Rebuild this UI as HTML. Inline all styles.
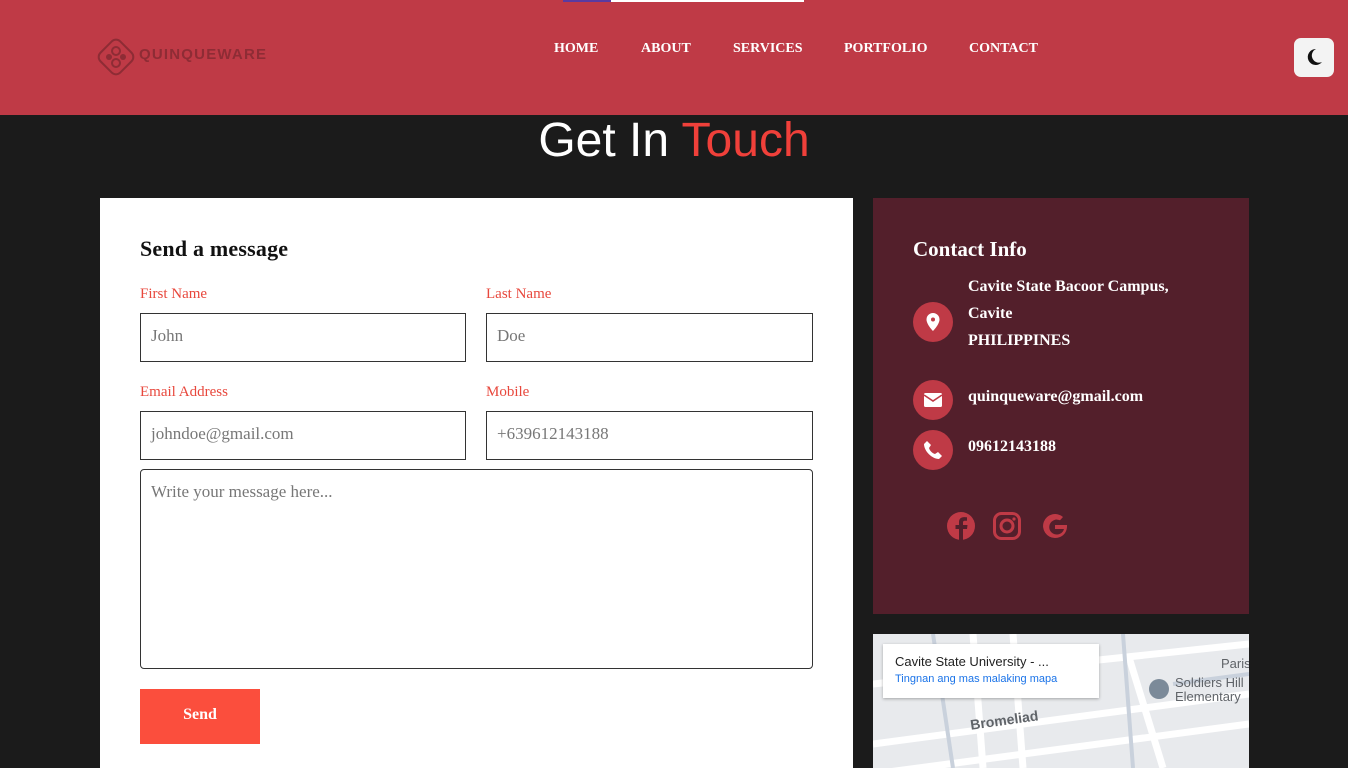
<!DOCTYPE html>
<html><head><meta charset="utf-8"><style>
*{box-sizing:border-box;margin:0;padding:0}
html,body{width:1348px;height:768px;overflow:hidden}
body{background:#1b1b1b;font-family:"Liberation Serif",serif;position:relative}
.hdr{position:absolute;left:0;top:0;width:1348px;height:115px;background:#bf3a46}
.nav a{position:absolute;top:41px;color:#fff;font-weight:bold;font-size:14px;text-decoration:none}
.abs{position:absolute}
h1{position:absolute;top:113px;width:1348px;text-align:center;font-family:"Liberation Sans",sans-serif;font-weight:normal;font-size:48px;color:#fff}
.card{position:absolute;left:100px;top:198px;width:753px;height:570px;background:#fff}
.lbl{position:absolute;color:#e8483d;font-size:15px}
.inp{position:absolute;border:1px solid #333;height:49px;color:#777;font-size:17px;padding:12px 10px}
.ci{position:absolute;left:873px;top:198px;width:376px;height:416px;background:#531f2b;color:#fff}
.ic{position:absolute;left:40px;width:40px;height:40px;border-radius:50%;background:#bf3a46}
.ct{position:absolute;left:95px;font-weight:bold;font-size:16px}
</style></head><body>
<div class="hdr">
<div class="abs" style="left:563px;top:0;width:48px;height:2px;background:#5a3aa0"></div>
<div class="abs" style="left:611px;top:0;width:193px;height:2px;background:#fff"></div>
<svg class="abs" style="left:94px;top:35px" width="44" height="44" viewBox="0 0 44 44"><rect x="8" y="8" width="28" height="28" rx="6" transform="rotate(45 22 22)" fill="none" stroke="#8e2c35" stroke-width="2"/><circle cx="22" cy="16" r="4" fill="none" stroke="#8e2c35" stroke-width="2"/><circle cx="22" cy="28" r="4" fill="none" stroke="#8e2c35" stroke-width="2"/><circle cx="15" cy="22" r="3" fill="#8e2c35"/><circle cx="29" cy="22" r="3" fill="#8e2c35"/></svg>
<div class="abs" style="left:139px;top:46px;color:#8e2c35;font-family:'Liberation Sans',sans-serif;font-weight:bold;font-size:15px;letter-spacing:1.2px">QUINQUEWARE</div>
<div class="nav"><a style="left:554px">HOME</a><a style="left:641px">ABOUT</a><a style="left:733px">SERVICES</a><a style="left:844px">PORTFOLIO</a><a style="left:969px">CONTACT</a></div>
<div class="abs" style="left:1294px;top:38px;width:40px;height:39px;background:#f3f3f3;border-radius:7px"><svg width="40" height="39" viewBox="0 0 40 39"><path d="M22 11a8 8 0 1 0 6 13 7 7 0 0 1-6-13z" fill="#111"/></svg></div>
</div>
<h1>Get In <span style="color:#f0403a">Touch</span></h1>
<div class="card">
<div class="abs" style="left:40px;top:38px;font-size:22px;color:#111;font-weight:bold;letter-spacing:0.2px">Send a message</div>
<div class="lbl" style="left:40px;top:88px">First Name</div><div class="lbl" style="left:386px;top:88px">Last Name</div>
<div class="inp" style="left:40px;top:115px;width:326px">John</div><div class="inp" style="left:386px;top:115px;width:327px">Doe</div>
<div class="lbl" style="left:40px;top:186px">Email Address</div><div class="lbl" style="left:386px;top:186px">Mobile</div>
<div class="inp" style="left:40px;top:213px;width:326px">johndoe@gmail.com</div><div class="inp" style="left:386px;top:213px;width:327px">+639612143188</div>
<div class="inp" style="left:40px;top:271px;width:673px;height:200px;border-radius:4px">Write your message here...</div>
<div class="abs" style="left:40px;top:491px;width:120px;height:55px;background:#fb4e3d;color:#fff;font-weight:bold;font-size:16px;text-align:center;line-height:51px">Send</div>
</div>
<div class="ci">
<div class="abs" style="left:40px;top:39px;font-size:21px;font-weight:bold">Contact Info</div>
<div class="ic" style="top:104px"><svg width="40" height="40" viewBox="0 0 40 40"><path d="M20 11a6.5 6.5 0 0 0-6.5 6.5c0 5 6.5 11.5 6.5 11.5s6.5-6.5 6.5-11.5A6.5 6.5 0 0 0 20 11z" fill="#fff"/><circle cx="20" cy="17.5" r="2" fill="#bf3a46"/></svg></div>
<div class="ct" style="top:75px;line-height:27px">Cavite State Bacoor Campus,<br>Cavite<br>PHILIPPINES</div>
<div class="ic" style="top:182px"><svg width="40" height="40" viewBox="0 0 40 40"><rect x="11" y="13" width="18" height="14" rx="1.5" fill="#fff"/><path d="M11 15l9 6 9-6" stroke="#bf3a46" stroke-width="1.6" fill="none"/></svg></div>
<div class="ct" style="top:190px">quinqueware@gmail.com</div>
<div class="ic" style="top:232px"><svg width="40" height="40" viewBox="0 0 40 40"><path d="M14 11l4 4-2 3c1 3 3 5 6 6l3-2 4 4-3 3c-7 0-15-8-15-15z" fill="#fff"/></svg></div>
<div class="ct" style="top:240px">09612143188</div>
<svg class="abs" style="left:73px;top:313px" width="130" height="30" viewBox="0 0 130 30"><circle cx="15" cy="15" r="14" fill="#bf3a46"/><path d="M17 29V18h4l.5-4H17v-2.5c0-1 .4-1.8 2-1.8h2V6.3c-.5 0-1.8-.2-3-.2-3 0-5 1.8-5 5V14H9.5v4H13v11z" fill="#531f2b"/><rect x="48.5" y="2.5" width="25" height="25" rx="7" fill="none" stroke="#bf3a46" stroke-width="3"/><circle cx="61" cy="15" r="6" fill="none" stroke="#bf3a46" stroke-width="3"/><circle cx="68" cy="8" r="1.6" fill="#bf3a46"/><path d="M109 14h12c.5 7-4 13-12 13a12 12 0 1 1 8-21l-3 3.3a7.5 7.5 0 1 0 4 8.7h-9z" fill="#bf3a46"/></svg>
</div>
<div class="abs" style="left:873px;top:634px;width:376px;height:134px;background:#e8eaed;overflow:hidden;font-family:'Liberation Sans',sans-serif">
<svg class="abs" style="left:0;top:0" width="376" height="134"><path d="M0 110 L376 60 M0 140 L376 90 M100 0 L110 134 M255 20 L290 134 M140 0 L150 134 M0 50 L376 10" stroke="#fff" stroke-width="7" fill="none"/><path d="M60 0 L80 134 M250 0 L260 134 M300 50 L376 40" stroke="#c9d1dc" stroke-width="4" fill="none"/></svg>
<div class="abs" style="left:10px;top:10px;width:216px;height:54px;background:#fff;box-shadow:0 1px 3px rgba(0,0,0,.3)"><div style="padding:10px 0 0 12px;font-size:13px;color:#222">Cavite State University - ...</div><div style="padding:4px 0 0 12px;font-size:11px;color:#1a73e8">Tingnan ang mas malaking mapa</div></div>
<div class="abs" style="left:97px;top:78px;font-size:14px;font-weight:bold;color:#5f6368;transform:rotate(-8deg)">Bromeliad</div>
<div class="abs" style="left:302px;top:42px;font-size:13px;color:#5f6368;line-height:14px">Soldiers Hill<br>Elementary</div>
<div class="abs" style="left:348px;top:22px;font-size:13px;color:#5f6368">Paris</div>
<div class="abs" style="left:276px;top:45px;width:20px;height:20px;border-radius:50%;background:#7b8a99"></div>
</div>
</body></html>
